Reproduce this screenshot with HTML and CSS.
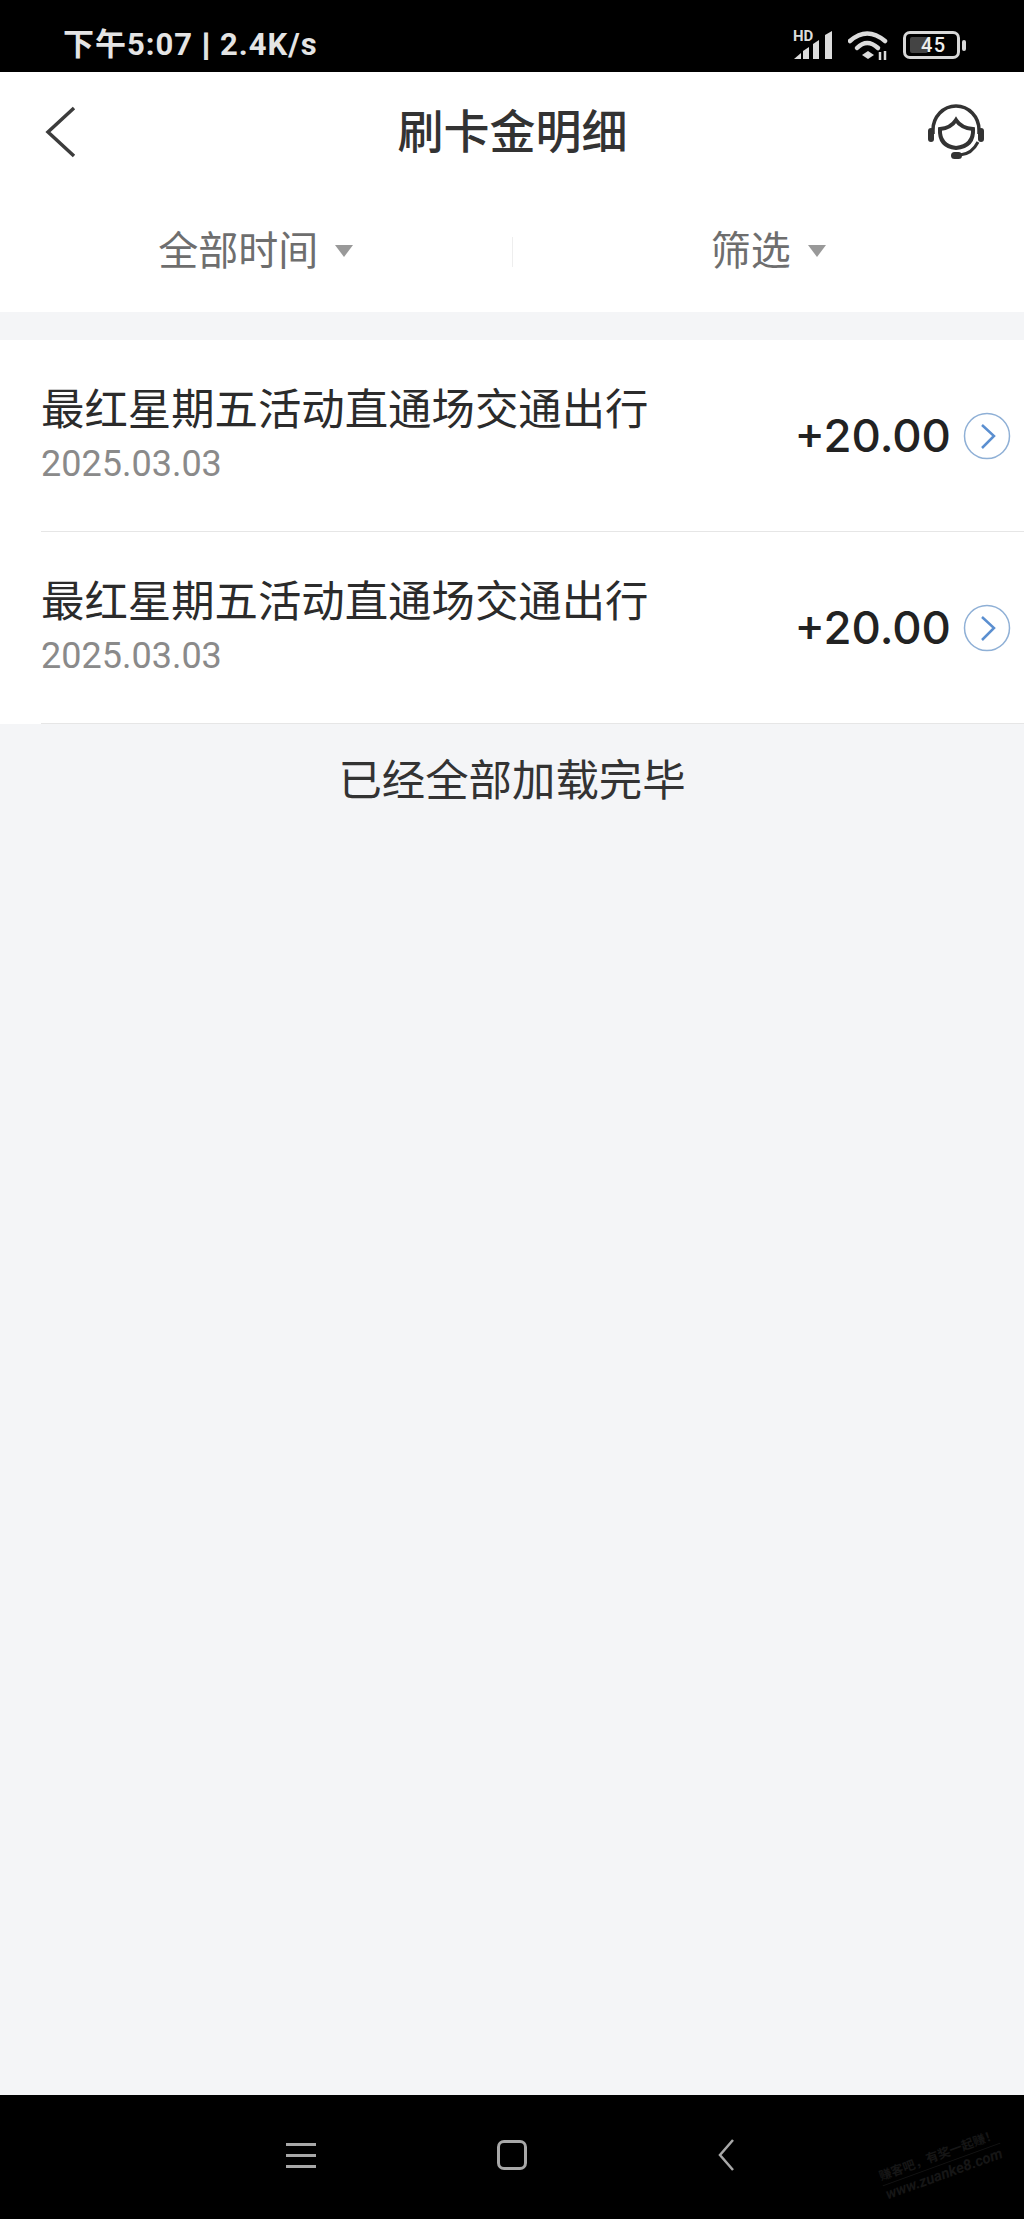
FILE: index.html
```html
<!DOCTYPE html>
<html lang="zh-CN">
<head>
  <meta charset="UTF-8">
  <title>刷卡金明细</title>
  <meta name="viewport" content="width=device-width, initial-scale=1.0">
  <link rel="stylesheet" href="styles.css">
</head>
<body>

<div class="app">
  <div class="status-bar">
    <div class="status-text">下午5:07<span class="status-sep">|</span>2.4K/s</div>
    <div class="status-icons">
      <div class="signal">
        <span class="hd-text">HD</span>
        <svg viewBox="0 0 40 28" width="40" height="28">
          <path d="M1 28 L8 22 V28 Z" fill="#dcdcdc"/>
          <path d="M10 28 V20 L16 16 V28 Z" fill="#dcdcdc"/>
          <path d="M20 28 V13 L26 9 V28 Z" fill="#dcdcdc"/>
          <path d="M32 28 V4 L39 0 V28 Z" fill="#dcdcdc"/>
        </svg>
      </div>
      <svg class="icon-wifi" viewBox="0 0 40 30" width="40" height="30">
        <path d="M2 10 Q19 -5 37 10" fill="none" stroke="#dcdcdc" stroke-width="4.5" stroke-linecap="round"/>
        <path d="M9 17 Q19 7 30 17" fill="none" stroke="#dcdcdc" stroke-width="4.5" stroke-linecap="round"/>
        <path d="M14 24 L20 20 L26 24 L20 28 Z" fill="#dcdcdc"/>
        <path d="M32 21 V29 M37 20 V29" stroke="#dcdcdc" stroke-width="2.5"/>
      </svg>
      <div class="battery">
        <div class="battery-body">
          <div class="battery-fill"></div>
          <span class="battery-num">45</span>
        </div>
        <div class="battery-tip"></div>
      </div>
    </div>
  </div>

  <div class="nav">
    <svg class="nav-back" viewBox="0 0 32 52" width="32" height="52">
      <path d="M29 2 L3 26 L29 50" fill="none" stroke="#3c3c3c" stroke-width="3.5"/>
    </svg>
    <h1 class="nav-title">刷卡金明细</h1>
    <svg class="nav-service" viewBox="0 0 56 56" width="56" height="56">
      <path d="M5 30 V26 A23 24 0 0 1 51 26 V30" fill="none" stroke="#333" stroke-width="3.5"/>
      <rect x="0" y="24" width="6" height="14" rx="3" fill="#333"/>
      <rect x="50" y="24" width="6" height="14" rx="3" fill="#333"/>
      <path d="M12 25 Q23 24 28 16 Q33 24 45 25 Q46 42 28 44 Q11 42 12 25 Z" fill="none" stroke="#333" stroke-width="4"/>
      <path d="M50 38 Q44 50 32 51" fill="none" stroke="#333" stroke-width="3"/>
      <rect x="23" y="48" width="11" height="7" rx="3.5" fill="#333"/>
    </svg>
  </div>

  <div class="filters">
    <div class="filter"><span>全部时间</span><i class="caret"></i></div>
    <div class="filter-line"></div>
    <div class="filter"><span>筛选</span><i class="caret"></i></div>
  </div>

  <div class="list">
    <div class="row">
      <div class="row-info">
        <div class="row-title">最红星期五活动直通场交通出行</div>
        <div class="row-date">2025.03.03</div>
      </div>
      <div class="row-amount">+20.00</div>
      <svg class="row-arrow" viewBox="0 0 48 48" width="48" height="48">
        <circle cx="24" cy="24" r="22.5" fill="none" stroke="#8fb0d6" stroke-width="1.5"/>
        <path d="M19 13 L31 24 L19 36" fill="none" stroke="#5b8fd0" stroke-width="2.5"/>
      </svg>
    </div>
    <div class="row">
      <div class="row-info">
        <div class="row-title">最红星期五活动直通场交通出行</div>
        <div class="row-date">2025.03.03</div>
      </div>
      <div class="row-amount">+20.00</div>
      <svg class="row-arrow" viewBox="0 0 48 48" width="48" height="48">
        <circle cx="24" cy="24" r="22.5" fill="none" stroke="#8fb0d6" stroke-width="1.5"/>
        <path d="M19 13 L31 24 L19 36" fill="none" stroke="#5b8fd0" stroke-width="2.5"/>
      </svg>
    </div>
  </div>

  <div class="done">已经全部加载完毕</div>

  <div class="bottom-bar">
    <div class="menu-icon"><b></b><b></b><b></b></div>
    <div class="home-icon"></div>
    <svg class="back-icon" viewBox="0 0 18 32" width="18" height="32">
      <path d="M16 1 L3 16 L16 31" fill="none" stroke="#a8a8a8" stroke-width="2.5"/>
    </svg>
    <div class="watermark">
      <div class="wm-top">赚客吧，有奖一起赚！</div>
      <div class="wm-bottom">www.zuanke8.com</div>
    </div>
  </div>
</div>

</body>
</html>
```

FILE: styles.css
```css
* {
  box-sizing: border-box;
}
body {
  margin: 0;
  font-family: "Roboto", "Noto Sans CJK SC", sans-serif;
  background: #f4f5f7;
}
.app {
  width: 1024px;
  height: 2219px;
  display: flex;
  flex-direction: column;
  overflow: hidden;
}

/* status bar */
.status-bar {
  height: 72px;
  flex: none;
  background: #000;
  color: #e4e4e4;
  display: flex;
  align-items: flex-start;
  justify-content: space-between;
  padding: 27px 58px 0 63px;
}
.status-text {
  font-size: 31px;
  font-weight: 700;
  line-height: 36px;
  letter-spacing: 1px;
}
.status-sep {
  display: inline-block;
  margin: 0 9px;
  font-weight: 900;
  -webkit-text-stroke: 1px #e4e4e4;
}
.status-icons {
  display: flex;
  align-items: flex-start;
  gap: 15px;
  padding-top: 4px;
}
.signal {
  position: relative;
  height: 28px;
}
.hd-text {
  position: absolute;
  left: 0;
  top: -2px;
  font-size: 15px;
  font-weight: 700;
  line-height: 15px;
  color: #dcdcdc;
}
.battery {
  display: flex;
  align-items: center;
  gap: 2px;
}
.battery-body {
  position: relative;
  width: 57px;
  height: 28px;
  border: 3px solid #d8d8d8;
  border-radius: 7px;
}
.battery-fill {
  position: absolute;
  left: 4px;
  top: 3px;
  bottom: 3px;
  width: 18px;
  background: #444;
  border-radius: 2px;
}
.battery-num {
  position: relative;
  display: block;
  font-size: 20px;
  font-weight: 500;
  line-height: 22px;
  letter-spacing: 1.5px;
  color: #eee;
  padding-left: 15px;
}
.battery-tip {
  width: 4px;
  height: 11px;
  background: #d8d8d8;
  border-radius: 2px;
}

/* nav */
.nav {
  height: 120px;
  flex: none;
  background: #fff;
  display: flex;
  align-items: center;
  justify-content: space-between;
  padding: 0 40px 0 45px;
}
.nav-title {
  margin: 0;
  font-size: 46px;
  font-weight: 500;
  color: #333;
  line-height: 60px;
  position: relative;
  left: 10px;
}

/* filters */
.filters {
  height: 120px;
  flex: none;
  background: #fff;
  display: flex;
  align-items: center;
}
.filter {
  flex: 1;
  display: flex;
  align-items: center;
  justify-content: center;
  gap: 17px;
  font-size: 40px;
  color: #6e6e6e;
  line-height: 52px;
}
.caret {
  width: 0;
  height: 0;
  border-left: 9px solid transparent;
  border-right: 9px solid transparent;
  border-top: 12px solid #999;
  margin-top: -3px;
}
.filter-line {
  width: 1px;
  height: 30px;
  background: #eee;
}

/* list */
.list {
  flex: none;
  margin-top: 28px;
  background: #fff;
}
.row {
  height: 192px;
  margin-left: 41px;
  display: flex;
  align-items: center;
  padding-right: 13px;
  border-bottom: 1px solid #e6e6e6;
}
.row-info {
  flex: 1;
  margin-top: -3px;
}
.row-title {
  font-size: 43.4px;
  color: #2b2b2b;
  line-height: 58px;
}
.row-date {
  font-size: 36px;
  color: #8a8a8a;
  line-height: 44px;
  margin-top: 2px;
}
.row-amount {
  font-family: "Inter", "Roboto", sans-serif;
  font-size: 45.5px;
  font-weight: 500;
  color: #222;
  margin-right: 12px;
}

/* end of list */
.done {
  flex: 1;
  text-align: center;
  font-size: 43.4px;
  color: #333;
  line-height: 58px;
  padding-top: 29px;
}

/* phone nav buttons */
.bottom-bar {
  position: relative;
  height: 124px;
  flex: none;
  background: #000;
  display: flex;
  align-items: center;
  padding-bottom: 4px;
}
.menu-icon {
  margin-left: 286px;
  width: 30px;
  display: flex;
  flex-direction: column;
  gap: 8px;
}
.menu-icon b {
  display: block;
  height: 3px;
  background: #a8a8a8;
}
.home-icon {
  margin-left: 181px;
  width: 30px;
  height: 30px;
  border: 3px solid #a8a8a8;
  border-radius: 7px;
}
.back-icon {
  margin-left: 190px;
}
.watermark {
  position: absolute;
  left: 879px;
  top: 50px;
  width: 125px;
  transform: rotate(-20deg);
  color: #161616;
  font-size: 12.5px;
  font-weight: 700;
  line-height: 19px;
  white-space: nowrap;
}
.wm-top {
  border-bottom: 1px solid #141414;
}
.wm-bottom {
  font-size: 15px;
  font-style: italic;
}
```
